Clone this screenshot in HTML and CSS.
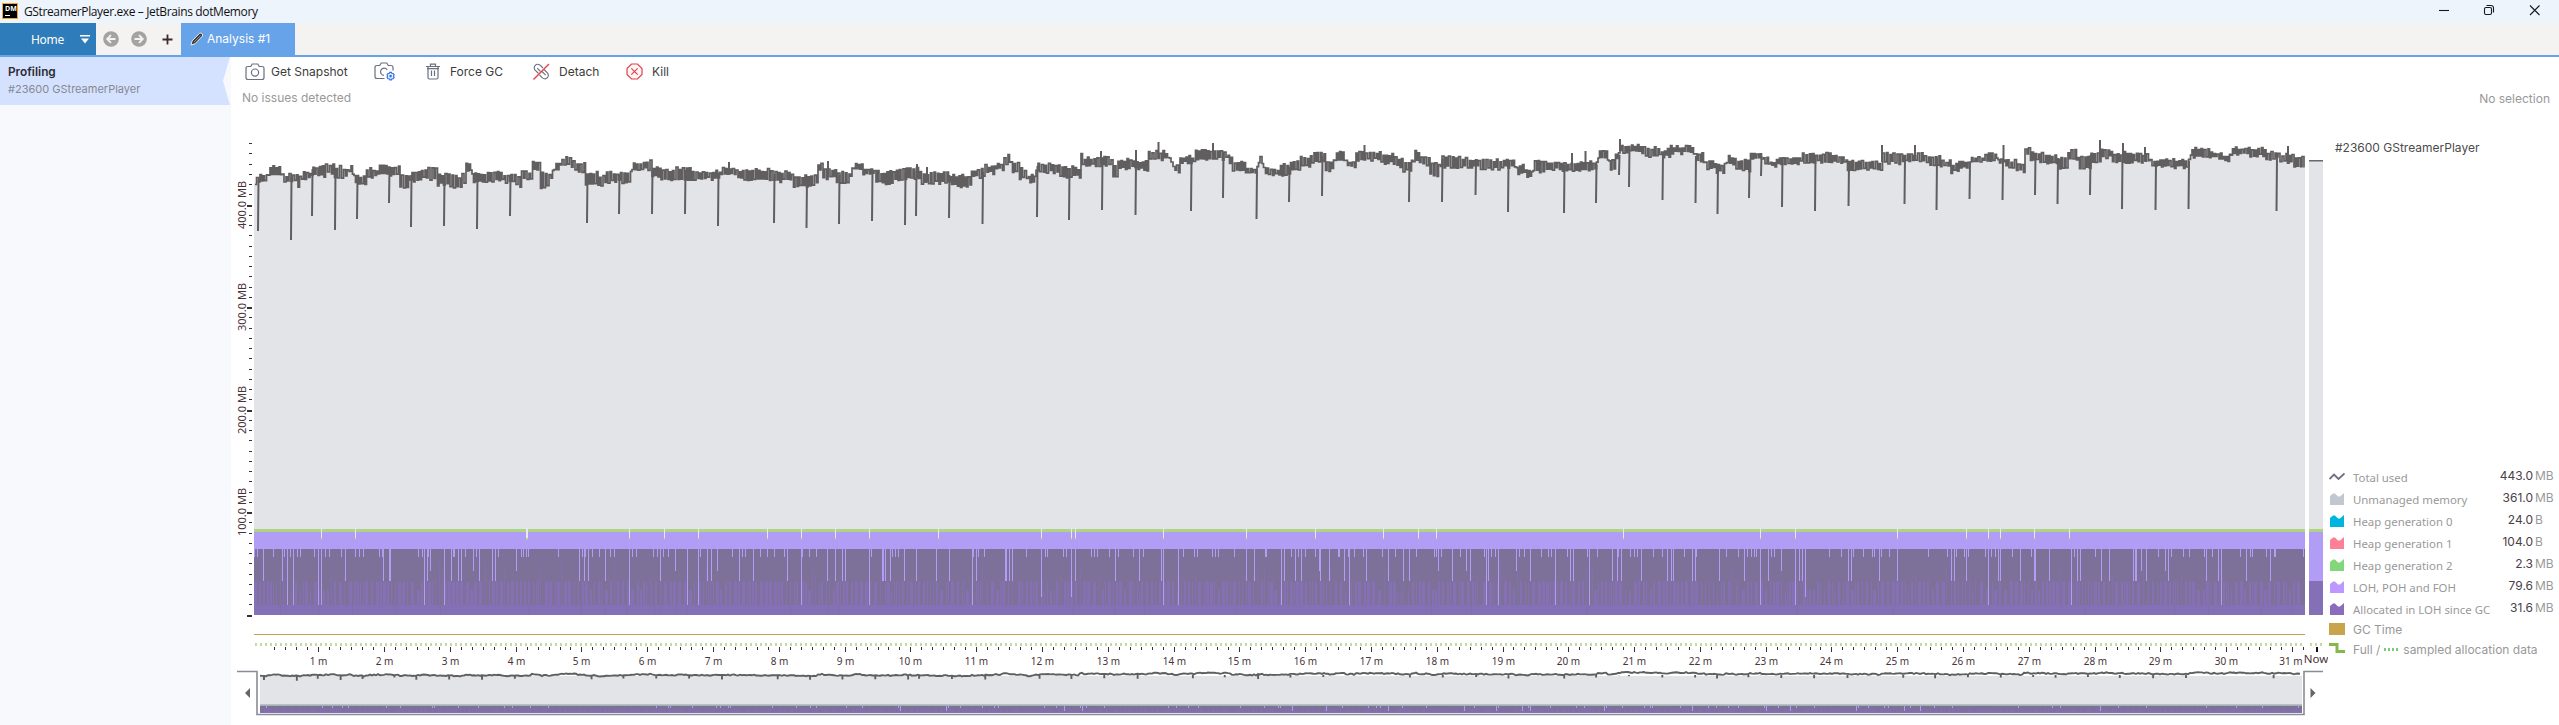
FILE: index.html
```html
<!DOCTYPE html>
<html lang="en">
<head>
   <meta charset="UTF-8">
   <meta name="viewport" content="width=device-width, initial-scale=1.0">
   <title>GStreamerPlayer.exe – JetBrains dotMemory</title>
   <link rel="stylesheet" href="styles.css">
</head>
<body>

   <header class="titlebar">
      <div class="logo"><span>DM</span><i></i></div>
      <span class="title">GStreamerPlayer.exe – JetBrains dotMemory</span>
      <svg class="window-buttons" width="102" height="23" viewBox="0 0 102 23">
         <g fill="none" stroke="#1a1a1a" stroke-width="1.1">
            <path d="M0 10.5h10"/>
            <rect x="45.5" y="7.5" width="7" height="7" rx="1.5"/>
            <path d="M47.5 5.5h4.500a2.500 2.500 0 0 1 2.500 2.500v4.500"/>
            <path d="M91 5.500l9.500 9.500M100.500 5.500l-9.500 9.500"/>
         </g>
      </svg>
   </header>

   <nav class="tabs">
      <div class="tab-home">
         <span>Home</span>
         <svg width="10" height="9" viewBox="0 0 10 9"><path d="M0 0h10v1.500H0zM1 3.500h8L5 8.500z" fill="#fff"/></svg>
      </div>
      <div class="nav-buttons">
         <svg width="16" height="16" viewBox="0 0 16 16"><circle cx="8" cy="8" r="7.800" fill="#a3a3a3"/><path d="M12.500 8H4.500M8 4.200L4.200 8L8 11.800" fill="none" stroke="#f5f3f1" stroke-width="1.900"/></svg>
         <svg width="16" height="16" viewBox="0 0 16 16"><circle cx="8" cy="8" r="7.800" fill="#a3a3a3"/><path d="M3.500 8h8M8 4.200L11.800 8L8 11.800" fill="none" stroke="#f5f3f1" stroke-width="1.900"/></svg>
         <svg width="11" height="11" viewBox="0 0 11 11"><path d="M0.500 5.500h10M5.500 0.500v10" stroke="#3c2a2e" stroke-width="1.800"/></svg>
      </div>
      <div class="tab-analysis">
         <svg width="14" height="14" viewBox="0 0 14 14"><path d="M1 13l1-4L9.500 1.300q1.500-.8 2.600.5t.3 2.300L5 11.800z" fill="#3d3d3d" stroke="#e6eaf0" stroke-width="1"/><path d="M4 10l6.500-6.500" stroke="#8a8a8a" stroke-width="1"/></svg>
         <span>Analysis #1</span>
      </div>
   </nav>

   <div class="workspace">
      <aside class="sidebar">
         <div class="session">
            <b>Profiling</b>
            <span>#23600 GStreamerPlayer</span>
         </div>
      </aside>

      <main class="main">
         <div class="toolbar">
            <div class="tool tool-snapshot">
               <svg width="20" height="18" viewBox="0 0 20 18"><g fill="none" stroke="#6c707e" stroke-width="1.200"><path d="M3 3.500h2.800l1.400-2.500h5.600l1.400 2.500H17q2 0 2 2v9q0 2-2 2H3q-2 0-2-2v-9q0-2 2-2z"/><circle cx="10" cy="9.600" r="3.600"/></g></svg>
               <span>Get Snapshot</span>
            </div>
            <div class="tool tool-config">
               <svg width="22" height="20" viewBox="0 0 22 20"><g fill="none" stroke="#6c707e" stroke-width="1.200"><path d="M10.500 16.500H3q-2 0-2-2v-9q0-2 2-2h2.800l1.400-2.500h5.600l1.400 2.500H17q2 0 2 2v3"/><path d="M13.200 7.900a3.600 3.600 0 1 0-3.200 5.500"/></g><g fill="#e7efff" stroke="#3574f0" stroke-width="1.200"><path d="M15.800 10.300h1.600l.5 1.100 1.300.1.900 1.300-.5 1.200.5 1.300-.9 1.300-1.300.1-.5 1.200h-1.600l-.6-1.200-1.300-.1-.8-1.300.5-1.300-.5-1.200.8-1.300 1.300-.1z"/><circle cx="16.600" cy="14.100" r=".7" fill="#3574f0"/></g></svg>
            </div>
            <div class="tool tool-gc">
               <svg width="14" height="17" viewBox="0 0 14 17"><path d="M0 3.500h14M4.500 3.500V1.200h5v2.300M2 3.500v11q0 1.500 1.500 1.500h7q1.500 0 1.500-1.500v-11M1 5.700h12M5.500 7.500v5.500M8.500 7.500v5.500" fill="none" stroke="#6c707e" stroke-width="1.200"/></svg>
               <span>Force GC</span>
            </div>
            <div class="tool tool-detach">
               <svg width="17" height="17" viewBox="0 0 17 17"><g fill="none" stroke="#6c707e" stroke-width="1.100"><path d="M5.500 10.500L1.900 6.900q-1.500-2.400.3-4.500t4.700-.5L10 5M7.500 8.500L4.200 5.200"/><path d="M11 6.500l3.600 3.600q1.600 2.300-.2 4.500t-4.700.5L6.500 12M9 8.500l3.700 3.700"/></g><path d="M.5 16.500L16 1" stroke="#e8414e" stroke-width="1.400"/></svg>
               <span>Detach</span>
            </div>
            <div class="tool tool-kill">
               <svg width="17" height="17" viewBox="0 0 17 17"><path d="M5.500 1h6L16 5.500v6L11.500 16h-6L1 11.500v-6z" fill="#fff5f5" stroke="#e0434f" stroke-width="1.200"/><path d="M5.300 5.300l6.400 6.400M11.700 5.300l-6.400 6.400" stroke="#e0434f" stroke-width="1.200"/></svg>
               <span>Kill</span>
            </div>
         </div>

         <div class="statusline">
            <span>No issues detected</span>
            <span class="selection">No selection</span>
         </div>

         <div class="timeline">
            <svg id="chart" width="2097" height="610" viewBox="231 115 2097 610"></svg>

            <section class="legend">
               <h2>#23600 GStreamerPlayer</h2>
               <ul>
                  <li>
                     <svg width="16" height="12" viewBox="0 0 16 12"><path d="M.5 8L5 3.500l4.500 4.500L15.500 2.500" fill="none" stroke="#6c707e" stroke-width="1.800"/></svg>
                     <span class="name">Total used</span><span class="value">443.0</span><span class="unit">MB</span>
                  </li>
                  <li><svg class="unmanaged" width="16" height="12" viewBox="0 0 16 12"><path d="M1 12V3l3-2.500h2L9 3.500h2L15 0v12z"/></svg><span class="name">Unmanaged memory</span><span class="value">361.0</span><span class="unit">MB</span></li>
                  <li><svg class="gen0" width="16" height="12" viewBox="0 0 16 12"><path d="M1 12V3l3-2.500h2L9 3.500h2L15 0v12z"/></svg><span class="name">Heap generation 0</span><span class="value">24.0</span><span class="unit">B</span></li>
                  <li><svg class="gen1" width="16" height="12" viewBox="0 0 16 12"><path d="M1 12V3l3-2.500h2L9 3.500h2L15 0v12z"/></svg><span class="name">Heap generation 1</span><span class="value">104.0</span><span class="unit">B</span></li>
                  <li><svg class="gen2" width="16" height="12" viewBox="0 0 16 12"><path d="M1 12V3l3-2.500h2L9 3.500h2L15 0v12z"/></svg><span class="name">Heap generation 2</span><span class="value">2.3</span><span class="unit">MB</span></li>
                  <li><svg class="loh" width="16" height="12" viewBox="0 0 16 12"><path d="M1 12V3l3-2.500h2L9 3.500h2L15 0v12z"/></svg><span class="name">LOH, POH and FOH</span><span class="value">79.6</span><span class="unit">MB</span></li>
                  <li><svg class="allocated" width="16" height="12" viewBox="0 0 16 12"><path d="M1 12V3l3-2.500h2L9 3.500h2L15 0v12z"/></svg><span class="name">Allocated in LOH since GC</span><span class="value">31.6</span><span class="unit">MB</span></li>
               </ul>
               <div class="legend-extra">
                  <svg width="16" height="12" viewBox="0 0 16 12"><path d="M0 0h16v12H0z" fill="#c9a44c"/></svg>
                  <span>GC Time</span>
               </div>
               <div class="legend-extra">
                  <svg width="16" height="12" viewBox="0 0 16 12"><path d="M0 1.500h8v7h8" fill="none" stroke="#84b84c" stroke-width="3"/></svg>
                  <span>Full /</span>
                  <i class="dots"></i>
                  <span>sampled allocation data</span>
               </div>
            </section>
         </div>
      </main>
   </div>

   <script src="chart.js"></script>
</body>
</html>
```
FILE: styles.css
```css
* {
   box-sizing: border-box;
}

body {
   margin: 0;
   width: 2559px;
   height: 725px;
   overflow: hidden;
   background: #fff;
   font-family: Inter, "Liberation Sans", sans-serif;
   font-size: 13px;
   color: #3c3c3c;
}

svg {
   display: block;
   flex: none;
}

span {
   white-space: nowrap;
}

/* Title bar */
.titlebar {
   display: flex;
   height: 23px;
   padding-left: 2px;
   background: #eef4fb;
}

.logo {
   display: flex;
   flex-direction: column;
   width: 16px;
   height: 16px;
   margin-top: 3px;
   padding: 1px 0 0 2px;
   border: 1px solid #f5a623;
   background: #000;
   color: #fff;
   font: bold 7px/7px "Open Sans", sans-serif;
}

.logo i {
   width: 5px;
   height: 1px;
   margin-top: 3px;
   background: #fff;
}

.title {
   margin-left: 6px;
   font: 12px/24px "Open Sans", "Noto Sans", sans-serif;
   letter-spacing: -0.37px;
   color: #111;
}

.window-buttons {
   margin: 0 18px 0 auto;
}

/* Tabs */
.tabs {
   display: flex;
   height: 34px;
   border-bottom: 2px solid #66a3e8;
   background: #f5f3f2;
}

.tab-home {
   display: flex;
   align-items: center;
   width: 96px;
   padding-left: 31px;
   gap: 16px;
   background: #2f7cba;
   color: #fff;
   font: 12px "Noto Sans", sans-serif;
   letter-spacing: -0.3px;
}

.nav-buttons {
   display: flex;
   align-items: center;
   gap: 12px;
   width: 85px;
   padding-left: 7px;
}

.nav-buttons svg:last-child {
   margin-left: 3px;
}

.tab-analysis {
   display: flex;
   align-items: center;
   gap: 3px;
   width: 114px;
   padding: 0 0 1px 9px;
   background: #66a3e8;
   color: #fff;
   font-size: 12px;
}

/* Sidebar */
.workspace {
   display: flex;
   height: 668px;
}

.sidebar {
   width: 231px;
   background: #f7f9fc;
}

.session {
   display: flex;
   flex-direction: column;
   height: 48px;
   padding: 8px 0 0 8px;
   background: #d5e2ff;
   clip-path: polygon(0 0, 230px 0, 223px 24px, 230px 48px, 0 48px);
   font-size: 11px;
   color: #858992;
}

.session b {
   margin-bottom: 2px;
   font-weight: 600;
   font-size: 11.800px;
   line-height: 15px;
   color: #2c2c34;
}

/* Toolbar */
.main {
   flex: 1;
   background: #fff;
}

.toolbar {
   display: flex;
   align-items: center;
   height: 29px;
   padding-left: 14px;
   font-size: 12px;
}

.tool {
   display: flex;
   align-items: center;
   gap: 9px;
}

.tool-snapshot {
   width: 129px;
   gap: 6px;
}

.tool-config {
   width: 52px;
}

.tool-gc {
   width: 107px;
   gap: 10px;
}

.tool-detach {
   width: 93px;
}

.statusline {
   display: flex;
   justify-content: space-between;
   height: 29px;
   padding: 4px 9px 0 11px;
   font-size: 12px;
   color: #999;
}

.selection {
   padding-top: 1px;
}

/* Chart */
.timeline {
   display: flex;
}

.axis-y,
.axis-x,
.now {
   font-family: "Noto Sans", sans-serif;
   fill: #4a333a;
   text-anchor: middle;
}

.axis-y {
   font-size: 11px;
}

.axis-x {
   font-size: 10px;
}

.now {
   font-size: 11.500px;
}

/* Legend */
.legend {
   width: 231px;
   padding-left: 1px;
}

.legend h2 {
   margin: 25px 0 0 6px;
   height: 327px;
   font-size: 12px;
   font-weight: 400;
   line-height: 16px;
   color: #4c4c4c;
}

.legend ul {
   margin: 0;
   padding: 0;
   list-style: none;
}

.legend li {
   display: flex;
   height: 22px;
   line-height: 18px;
   color: #999;
}

.legend li svg {
   margin-top: 4px;
}

.name {
   width: 136px;
   margin-left: 8px;
   padding-top: 2px;
   font-family: "Noto Sans", sans-serif;
   font-size: 11.400px;
}

.value {
   width: 44px;
   text-align: right;
   font-size: 12px;
   color: #4a4048;
}

.unit {
   margin-left: 2px;
   font-size: 12px;
}

.unmanaged { fill: #c2c8d0; }
.gen0 { fill: #00b4e0; }
.gen1 { fill: #ff8096; }
.gen2 { fill: #84d67a; }
.loh { fill: #bb99ff; }
.allocated { fill: #8b6cbc; }

.legend ul + .legend-extra {
   margin-top: -2px;
}

.legend-extra {
   display: flex;
   align-items: center;
   height: 20px;
   font-size: 12px;
   color: #999;
}

.legend-extra svg {
   margin-right: 8px;
}

.dots {
   width: 14px;
   height: 3px;
   margin: 0 5px 0 4px;
   background: repeating-linear-gradient(90deg, #7fca7a 0 2px, transparent 2px 4px);
}
```
FILE: chart.js
```js
const chart = document.getElementById('chart');
const LEFT = 254;
const RIGHT = 2305;
const ZERO = 615;

// repeatable noise, so the graph is the same on every load
let seed = 7;
function rnd() {
   seed = (seed * 16807) % 2147483647;
   return seed / 2147483647;
}

function add(name, attrs, text) {
   const el = document.createElementNS('http://www.w3.org/2000/svg', name);
   for (const key in attrs) el.setAttribute(key, attrs[key]);
   if (text) el.textContent = text;
   chart.appendChild(el);
   return el;
}

function rect(x, y, w, h, fill) {
   add('rect', { x: x, y: y, width: w, height: h, fill: fill });
}

const parts = [[220, 3], [600, 2.613], [1170, 2.613], [1750, 2.613]];
function eachSample(lists, draw) {
   lists.forEach((list, i) => {
      list.forEach(v => draw(Math.floor(parts[i][0] + v / parts[i][1])));
   });
}

// x, top, bottom of the total line
const band = [
   [254,177,184],[259,174,183],[267,166,177],[282,174,183],[298,175,189],[301,171,180],[311,166,177],[325,164,175],[334,166,180],[340,168,178],[348,165,174],[354,176,184],[366,168,178],[378,165,176],[391,165,176],[399,174,189],[410,172,182],[421,168,180],[437,174,186],[450,175,188],[462,174,184],[465,163,173],[472,172,183],[490,170,182],[503,174,184],[517,176,189],[521,171,181],[531,161,172],[540,172,188],[551,168,180],[554,161,172],[560,157,167],[568,158,170],[577,163,172],[585,172,186],[597,176,187],[605,172,183],[618,171,183],[626,171,183],[632,162,172],[642,160,170],[652,167,178],[661,169,181],[676,167,180],[690,171,180],
   [700,170,180],[720,167,176],[735,169,180],[770,171,182],[786,172,182],[792,175,187],[815,176,185],[818,162,170],[823,168,179],[836,172,183],[850,168,178],[853,162,170],[862,167,175],[873,171,184],[894,168,180],[920,172,184],[950,175,187],[965,177,187],[971,169,178],[985,165,174],[995,162,170],[1003,155,164],[1010,161,172],[1018,168,180],[1028,174,183],[1036,163,173],[1060,167,179],[1069,165,177],[1077,168,180],[1080,152,166],[1083,157,166],[1100,157,166],[1112,165,177],[1118,159,169],[1136,160,170],[1146,165,171],[1148,151,160],[1168,156,165],[1173,164,173],[1180,156,164],[1195,150,160],[1227,155,165],[1232,162,172],[1245,167,175],[1258,157,165],[1263,168,176],[1280,164,176],[1290,160,172],[1300,156,167],[1310,153,163],[1325,160,171],[1335,150,160],[1345,160,168],[1355,152,161],[1380,153,164],[1395,157,168],[1402,160,172],[1412,151,162],[1420,157,166],[1430,163,176],[1440,156,168],[1460,158,168],[1480,159,170],
   [1500,160,168],[1515,165,175],[1525,170,179],[1532,161,173],[1545,161,170],[1560,162,172],[1575,161,171],[1595,162,170],[1597,150,160],[1608,160,170],[1615,152,161],[1620,144,153],[1645,147,157],[1660,149,158],[1670,146,154],[1695,153,163],[1705,160,170],[1715,163,173],[1725,156,165],[1735,160,170],[1748,164,172],[1750,153,160],[1763,155,165],[1770,160,168],[1778,156,165],[1800,153,163],[1835,155,163],[1845,160,171],[1875,161,170],[1881,153,164],[1900,153,162],[1925,155,165],[1940,160,168],[1950,164,173],[1958,160,168],[1970,156,163],[1985,153,161],[1998,157,164],[2004,160,168],[2015,164,172],[2024,146,155],[2030,152,162],[2045,155,165],[2058,158,170],[2067,150,160],[2078,156,170],[2090,152,162],[2100,148,158],[2110,152,162],[2125,153,163],[2150,159,168],[2187,158,168],[2190,148,158],[2210,151,159],[2222,154,161],[2230,147,156],[2250,148,157],[2265,152,160],[2280,154,163],[2293,157,168],[2304,160,169]
];

const dips = [
   [258,231],[291,240],[312,216],[335,230],[357,219],[389,203],[411,227],[444,226],[477,229],[510,216],[587,223],[619,214],[652,214],[685,214],[718,226],[774,223],[806.5,228],[839,224],[872,221],[905,225],[916,216],[949,218],[982.5,224],[1037,217],[1069,220],[1102,210],[1135.5,215],[1191,211],[1223,198],[1256.5,219],[1289,202],[1322,196],[1409,202],[1442,202],[1475.5,195],
   [1508,212],[1564,213],[1596,203],[1619,175],[1629,187],[1662.5,200],[1695.5,203],[1717.5,214],[1749,198],[1761,176],[1782,207],[1815,211],[1848.5,206],[1904.5,204],[1936.5,210],[1969.5,199],[2002.5,200],[2035,195],[2057.5,204],[2090,195],[2122,209],[2155.5,210],[2188.5,209],[2276.5,211]
];

const peaks = [[729,162],[828,161],[917,164],[927,167],[1101,151],[1136,150],[1158.5,142],[1213,143],[1364.5,145],[1572,153],[1585.5,151],[1620,139],[1882,145],[1915,145],[2003.5,145],[2100,140],[2123,143],[2145,147],[2288,146]];

function bandAt(x) {
   let found = band[0];
   for (const item of band) {
      if (item[0] <= x) found = item;
   }
   return found;
}

// total line with the grey area under it
let line = '';
let low = true;
for (let x = LEFT + 1; x < RIGHT; x += rnd() < 0.3 ? 2 : 1.500) {
   const [, top, bottom] = bandAt(x);
   const y = low ? bottom + 0.5 - rnd() * 3.500 : top - 0.5 + rnd() * 3.500;
   line += (line ? 'H' + x + 'V' : 'M' + x + ' ') + y.toFixed(1);
   low = !low;
}
add('path', { d: line + `H${RIGHT}V${ZERO}H${LEFT}V180z`, fill: '#e3e4e8' });
let spikes = '';
dips.forEach(([x, y]) => spikes += `M${x + 0.5} ${bandAt(x)[1] + 3}L${x} ${y}`);
peaks.forEach(([x, y]) => spikes += `M${x} ${y}V${bandAt(x)[2] - 2}`);
add('path', { d: line, fill: 'none', stroke: '#605e5f', 'stroke-width': 1.7 });
add('path', { d: spikes, fill: 'none', stroke: '#605e5f', 'stroke-width': 2 });

// managed heap
rect(LEFT, 529, RIGHT - LEFT, 3, '#add581');
rect(LEFT, 532, RIGHT - LEFT, 17, '#b19df6');
rect(LEFT, 549, RIGHT - LEFT, 56, '#7e7199');
rect(LEFT, 605, RIGHT - LEFT, 10, '#8470b7');
for (let x = LEFT; x < RIGHT - 3;) {
   const w = 1 + Math.floor(rnd() * 3);
   const tall = rnd() < 0.09;
   const y = tall ? 560 + rnd() * 20 : rnd() < 0.12 ? 590 : 581.500;
   rect(x, y, tall ? 1 : w, 606 - y, tall ? '#8170ab' : '#8470b3');
   x += w + 1 + Math.floor(rnd() * 2.800);
}

const shortGaps = [
   [103,111,160,188,194,211,220,232,241,283,316,328,363,406,418,430,478,487,595,607,625,700,703,736,769,835,904,909,920,925,1015,1087,1095,1117,1138],
   [27,38,85,95,139,150,165,178,262,345,372,380,420,437,456,481,530,547,565,709,765,773,781,975,990,1005,1115,1163,1170,1212,1218,1285,1292,1299,1331,1355,1394,1421],
   [35,65,72,111,118,126,168,249,252,317,335,353,380,440,442,466,482,506,556,589,643,691,697,710,758,821,841,851,912,926,970,989,996,1039,1091,1116,1172,1204,1213,1222,1263,1286,1345,1377,1454,1485,1509],
   [4,11,18,56,64,207,239,271,297,320,326,343,365,466,516,540,560,571,616,630,641,686,735,848,903,1067,1101,1132,1148,1187,1209,1282,1308,1314,1350,1371,1374,1446]
];
const midGaps = [
   [130,187,376,490,509,512,622,694,715,724,778,817,826,1078,1093,1105],
   [14,157,282,291,364,401,490,594,615,633,641,738,741,746,758,795,827,879,913,985,1059,1062,1069,1077,1242,1347,1410,1467],
   [200,221,299,327,343,393,416,456,514,571,611,626,738,785,832,941,1047,1054,1157,1169,1181,1233,1300,1310,1315,1366,1373,1437,1502],
   [48,129,136,257,265,338,385,527,534,565,649,654,706,743,746,783,856,864,919,939,1002,1008,1011,1035,1093,1193,1224,1297,1360]
];
const deepGaps = [
   [202,220,295,304,613,673],
   [77,228,257,526,704,973,1472,1512],
   [291,469,826,858,1007,1096],
   [27,118,623,840,1232]
];
const halfGaps = [[631,889,760], [197,306], [391,701,774,905], [82,1022,1086]];
const drops = [
   [304,406,919,922],
   [77,168,257,437,526,615,704,884,1153,1232,1242,1472],
   [200,380,558,649,696,1185],
   [27,118,385,566,623,654,743,835]
];
const seams = [
   [180,294,398,527,662,927,1083],
   [14,69,143,157,198,227,499,598,622,1238,1345,1424],
   [172,684,787,1088],
   [125,376,877,1110,1198,1337,1418]
];
eachSample(shortGaps, x => rect(x, 549, 1, 8, '#b19df6'));
eachSample(midGaps, x => rect(x, 549, 1, 32, '#b19df6'));
eachSample(deepGaps, x => rect(x, 549, 1, 56, '#b19df6'));
eachSample(halfGaps, x => rect(x, 549, 1, 22, '#b19df6'));
eachSample([[], [1153, 1232], [], [145]], x => rect(x, 549, 1, 48, '#b19df6'));
eachSample(seams, x => rect(x, 605, 1, 10, '#7d70a4'));
eachSample(drops, x => {
   rect(x, 528, 1, 10, '#e8e8ef');
   rect(x, 538, 1, 2, '#add581');
});

// current state column
rect(2309, 160, 14, 369, '#e3e4e8');
rect(2309, 160, 14, 1.5, '#6a686a');
rect(2309, 529, 14, 3, '#add581');
rect(2309, 532, 14, 49, '#b19df6');
rect(2309, 581, 14, 34, '#8470b7');

// memory axis
for (let i = 0; i <= 46; i++) {
   const y = Math.round(614.500 - i * 10.250);
   if (i % 10 == 0) {
      rect(247, y, 5, 2, '#3f2c33');
      if (i) add('text', { class: 'axis-y', transform: `translate(246 ${y}) rotate(-90)` }, i * 10 + '.0 MB');
   } else {
      rect(249, y, 3, 1, '#3f2c33');
   }
}

// GC time and allocation data
rect(LEFT, 634, RIGHT - LEFT, 1, '#c6a24c');
for (let x = 255; x < 2303; x += 5) rect(x, 643, 2, 3, '#c0dc9f');
for (let x = 2310; x < 2322; x += 5) rect(x, 643, 2, 3, '#c0dc9f');

// time axis
for (let i = 2; i <= 187; i++) {
   const x = Math.round(252.500 + i * 10.965);
   rect(x, 647, 1, i % 6 ? 3 : 5, '#3f2c33');
   if (i % 6 == 0) add('text', { class: 'axis-x', x: i == 186 ? x - 1 : x + 0.5, y: 664.5 }, i / 6 + ' m');
}
rect(2316, 647, 2, 5, '#111');
add('text', { class: 'now', x: 2316, y: 663 }, 'Now');

// overview strip
rect(260, 676, 2042, 28, '#e3e4e8');
let small = '';
for (let x = 260; x < 2302; x += 2) {
   small += (small ? 'L' : 'M') + x + ' ' + (675.300 + (bandAt(x)[1] - 170) * 0.11 + (rnd() - 0.5) * 1.200).toFixed(1);
}
dips.forEach(([x, y]) => small += `M${260 + (x - 254) * 0.9956} 675v${((y - 172) * 0.085).toFixed(1)}`);
add('path', { d: small, fill: 'none', stroke: '#5f5f60', 'stroke-width': 1.9 });
rect(260, 704, 2042, 1, '#add581');
rect(260, 705, 2042, 8, '#7e7199');
rect(260, 705, 2042, 1, '#b19df6');
for (let x = 260; x < 2302; x += 2) {
   if (rnd() < 0.6) rect(x, 709, 1, 3, '#8470b7');
   if (rnd() < 0.1) rect(x, 706, 1, rnd() < 0.2 ? 5 : 2, '#b19df6');
}
rect(260, 711.500, 2042, 1.5, '#8470b7');
add('path', { d: 'M237 671.500H257V714.500H2304V671.500H2323', fill: 'none', stroke: '#8b8b96', 'stroke-width': 1.6 });
add('path', { d: 'M250 688v10l-5-5zM2310.500 688v10l5-5z', fill: '#666' });
```
